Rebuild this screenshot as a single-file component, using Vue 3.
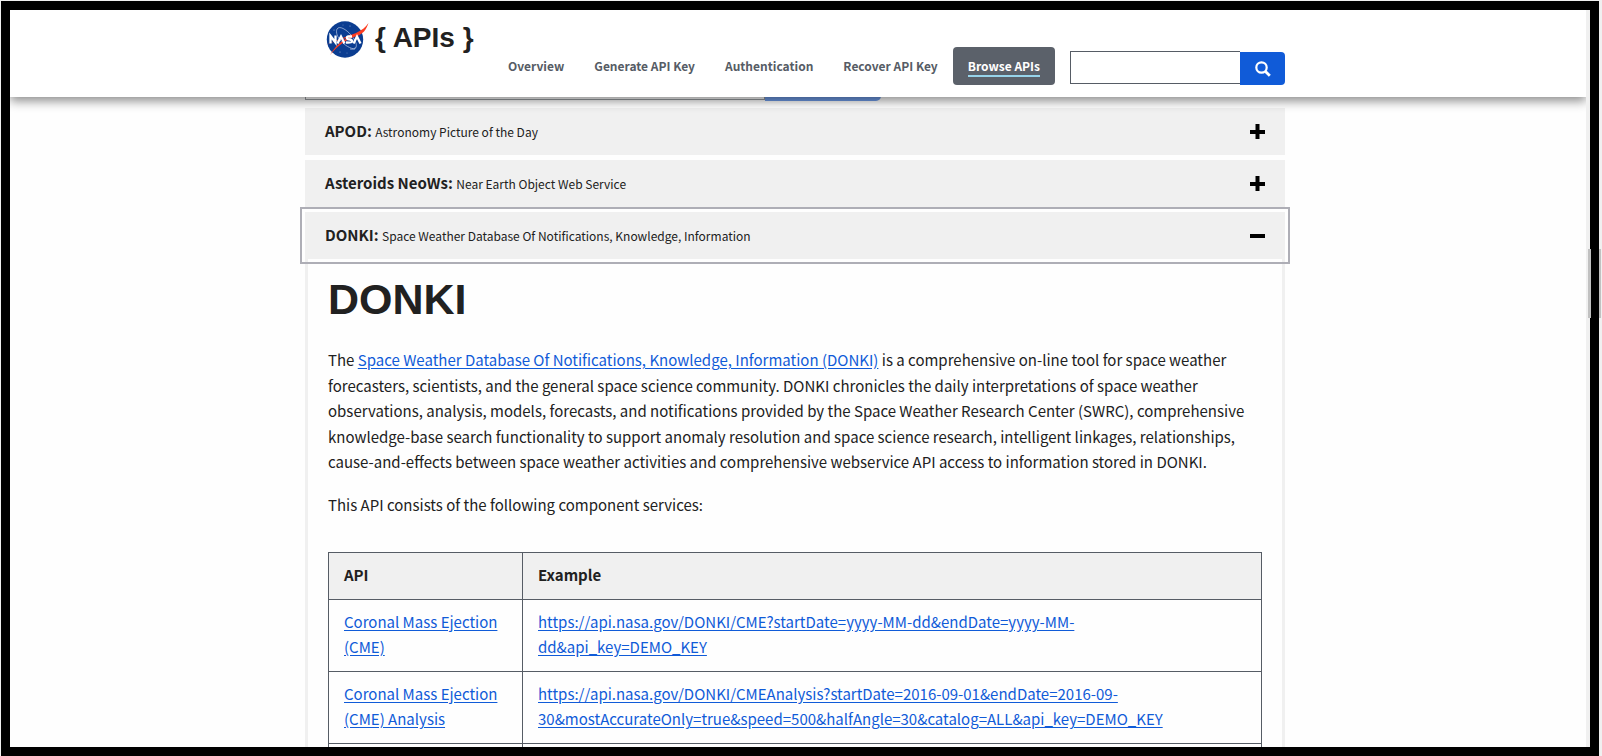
<script setup>
import { ref } from 'vue'

const navLinks = [
  { label: 'Overview', active: false },
  { label: 'Generate API Key', active: false },
  { label: 'Authentication', active: false },
  { label: 'Recover API Key', active: false },
  { label: 'Browse APIs', active: true },
]

const openApi = ref('DONKI')
const apis = [
  { name: 'APOD', title: 'Astronomy Picture of the Day' },
  { name: 'Asteroids NeoWs', title: 'Near Earth Object Web Service' },
  { name: 'DONKI', title: 'Space Weather Database Of Notifications, Knowledge, Information' },
]

const services = [
  {
    name: 'Coronal Mass Ejection (CME)',
    url: 'https://api.nasa.gov/DONKI/CME?startDate=yyyy-MM-dd&endDate=yyyy-MM-dd&api_key=DEMO_KEY',
  },
  {
    name: 'Coronal Mass Ejection (CME) Analysis',
    url: 'https://api.nasa.gov/DONKI/CMEAnalysis?startDate=2016-09-01&endDate=2016-09-30&mostAccurateOnly=true&speed=500&halfAngle=30&catalog=ALL&api_key=DEMO_KEY',
  },
  { name: '', url: '' },
]
</script>

<template>
  <div class="page">
    <div class="window">
      <div class="view">
        <header class="header">
          <div class="container header-row">
            <a class="brand" href="#">
              <svg class="logo" viewBox="0 0 44 40" aria-hidden="true">
                <circle cx="20" cy="20.5" r="18.2" fill="#0b3d91" />
                <g fill="#fff" opacity=".7">
                  <circle cx="9" cy="11" r=".5" /><circle cx="25" cy="7" r=".5" />
                  <circle cx="30" cy="29" r=".5" /><circle cx="15" cy="33" r=".5" />
                  <circle cx="22" cy="34" r=".4" /><circle cx="18" cy="6" r=".4" />
                </g>
                <path d="M30 30 C20 29 9 17 12 10 C15 5 27 14 31 24 C32 28 31 31 25 30" fill="none" stroke="#b9c8e4" stroke-width=".7" />
                <path d="M0 26 C12 21 20 18 31 14 C37 11 41 8 43.500 4 C41 11 38 15 32 17 C22 20 13 26 5 36 C11 26 17 21 25 18 C16 20 8 23 0 26 Z" fill="#fc3d21" />
                <g fill="none" stroke="#fff" stroke-width="2.300">
                  <path d="M5.500 24.500 V17 L10.500 23.500 V16.500" />
                  <path d="M12.500 24.500 L16 17.500 L19.500 24.500" />
                  <path d="M27 17.500 H23.500 Q21.500 17.500 22 19.500 Q22.500 20.500 25 20.500 Q27.500 21 27 22.800 Q26.500 23.800 21 23.500" />
                  <path d="M28.500 24.500 L32 17.500 L35.500 24.500" />
                </g>
              </svg>
              <span>{ APIs }</span>
            </a>
            <nav class="nav" aria-label="Main">
              <a
                v-for="link in navLinks"
                :key="link.label"
                href="#"
                class="nav-link"
                :class="{ active: link.active }"
              ><span>{{ link.label }}</span></a>
              <form class="search" role="search" @submit.prevent>
                <input class="search-input" type="search" aria-label="Search" />
                <button class="search-button" type="submit" aria-label="Search">
                  <svg viewBox="0 0 16 16" width="16" height="16" aria-hidden="true">
                    <circle cx="6.500" cy="6.500" r="5.200" fill="none" stroke="#fff" stroke-width="2.200" />
                    <path d="M10.500 10.500 L14.800 14.800" stroke="#fff" stroke-width="2.800" />
                  </svg>
                </button>
              </form>
            </nav>
          </div>
        </header>

        <main class="main">
          <div class="container">
            <form class="filter" @submit.prevent>
              <input class="filter-input" type="search" aria-label="Search APIs" />
              <button class="filter-button" type="submit" aria-label="Search APIs"></button>
            </form>
            <button
              v-for="api in apis"
              :key="api.name"
              type="button"
              class="accordion"
              :class="{ open: openApi === api.name }"
              :aria-expanded="openApi === api.name"
              @click="openApi = api.name"
            >
              <span class="accordion-title"><b>{{ api.name }}:</b> <small>{{ api.title }}</small></span>
              <svg viewBox="0 0 16 16" width="16" height="16" aria-hidden="true">
                <path d="M1 6 H16 V10 H1 Z" />
                <path v-if="openApi !== api.name" d="M6.500 0 H10.500 V15 H6.500 Z" />
              </svg>
            </button>

            <section class="panel">
              <h1>DONKI</h1>
              <p>
                The <a href="#">Space Weather Database Of Notifications, Knowledge, Information (DONKI)</a>
                is a comprehensive on-line tool for space weather forecasters, scientists, and the
                general space science community. DONKI chronicles the daily interpretations of space
                weather observations, analysis, models, forecasts, and notifications provided by the
                Space Weather Research Center (SWRC), comprehensive knowledge-base search
                functionality to support anomaly resolution and space science research, intelligent
                linkages, relationships, cause-and-effects between space weather activities and
                comprehensive webservice API access to information stored in DONKI.
              </p>
              <p>This API consists of the following component services:</p>
              <table>
                <thead>
                  <tr><th scope="col" class="name-col">API</th><th scope="col">Example</th></tr>
                </thead>
                <tbody>
                  <tr v-for="service in services" :key="service.name">
                    <td><a href="#">{{ service.name }}</a></td>
                    <td><a href="#">{{ service.url }}</a></td>
                  </tr>
                </tbody>
              </table>
            </section>
          </div>
        </main>
      </div>
      <div class="track"></div>
    </div>
    <div class="thumb"></div>
  </div>
</template>

<style>
body {
  background: #f0f0f0;
  overflow: hidden;
}
</style>

<style scoped>
* {
  box-sizing: border-box;
}
.page {
  position: relative;
  height: 100vh;
  padding: 1px 3px 0 1px;
  color: #212121;
  font-family: 'Noto Sans CJK SC', 'Noto Sans', sans-serif;
  font-size: 15px;
  line-height: 1.7;
}
.window {
  display: flex;
  height: 100%;
  border: 9px solid #000;
  background: #fefefe;
}
.view {
  display: flex;
  flex-direction: column;
  flex: 1;
  min-width: 0;
  overflow: hidden;
}
.track {
  width: 4px;
  background: #f0f0f0;
}
.thumb {
  position: absolute;
  top: 33%;
  right: 1px;
  width: 13px;
  height: 69px;
  background: linear-gradient(90deg, #c1c1c1 3px, #000 3px 11px, #c1c1c1 11px);
}
.container {
  width: 100%;
  max-width: 980px;
  margin: 0 auto;
}
.header {
  position: relative;
  z-index: 1;
  padding-right: 6px;
  background: #fff;
  box-shadow: 0 4px 10px rgba(0, 0, 0, 0.45);
}
.header-row {
  display: flex;
  justify-content: space-between;
  height: 87px;
}
.brand {
  display: flex;
  gap: 6px;
  height: 56px;
  padding: 9px 0 0 20px;
  color: #212121;
  font: bold 28px/38px 'Liberation Sans', Arial, sans-serif;
  text-decoration: none;
  white-space: nowrap;
}
.logo {
  width: 44px;
  height: 40px;
}
.nav {
  display: flex;
  align-items: flex-end;
  padding-bottom: 12px;
}
.nav-link {
  height: 38px;
  padding: 10px 15px;
  border-radius: 4px;
  color: #565c65;
  font-size: 12px;
  font-weight: bold;
  line-height: 18px;
  text-decoration: none;
  white-space: nowrap;
}
.nav-link span {
  display: block;
}
.nav-link.active {
  background: #5b616a;
  color: #fff;
}
.nav-link.active span {
  border-bottom: 2px solid #97d4ea;
}
.search {
  display: flex;
  align-items: flex-end;
  margin-left: 15px;
}
.search-input {
  width: 170px;
  height: 33px;
  margin-bottom: 1px;
  border: 1px solid #565c65;
  border-right: 0;
  background: #fff;
}
.search-button {
  display: grid;
  place-items: center;
  width: 45px;
  height: 33px;
  padding: 0;
  border: 0;
  border-radius: 0 4px 4px 0;
  background: #105bd8;
}
.main {
  flex: 1;
  min-height: 0;
  padding-right: 6px;
  overflow: hidden;
}
.filter {
  display: flex;
  height: 32px;
  margin: -28px 0 7px;
  opacity: 0.6;
}
.filter-input {
  width: 460px;
  height: 31px;
  border: 1px solid #565c65;
  background: #fff;
}
.filter-button {
  width: 116px;
  border: 0;
  border-radius: 0 5px 5px 0;
  background: #105bd8;
}
.accordion {
  display: flex;
  align-items: center;
  justify-content: space-between;
  width: 100%;
  height: 47px;
  margin: 0 0 5px;
  padding: 0 20px;
  border: 0;
  background: #f0f0f0;
  color: #212121;
  font: inherit;
  text-align: left;
}
.accordion-title {
  padding-bottom: 2px;
}
.accordion small {
  font-size: 12px;
}
.accordion.open {
  margin-bottom: 0;
  outline: 2px solid #aeaeb6;
  outline-offset: 3px;
}
.panel {
  padding: 15px 20px 20px;
  border: solid #f0f0f0;
  border-width: 0 3px;
}
h1 {
  margin: 0 0 22px;
  font: bold 43px/51px 'Liberation Sans', Arial, sans-serif;
}
p {
  margin: 0 0 17px;
}
a {
  color: #105bd8;
  text-underline-offset: 2px;
}
table {
  width: 100%;
  margin-top: 35px;
  border-collapse: collapse;
}
th,
td {
  padding: 9px 22px 11px 15px;
  border: 1px solid #565c65;
  text-align: left;
  vertical-align: top;
}
th {
  background: #f0f0f0;
}
.name-col {
  width: 194px;
}
</style>
